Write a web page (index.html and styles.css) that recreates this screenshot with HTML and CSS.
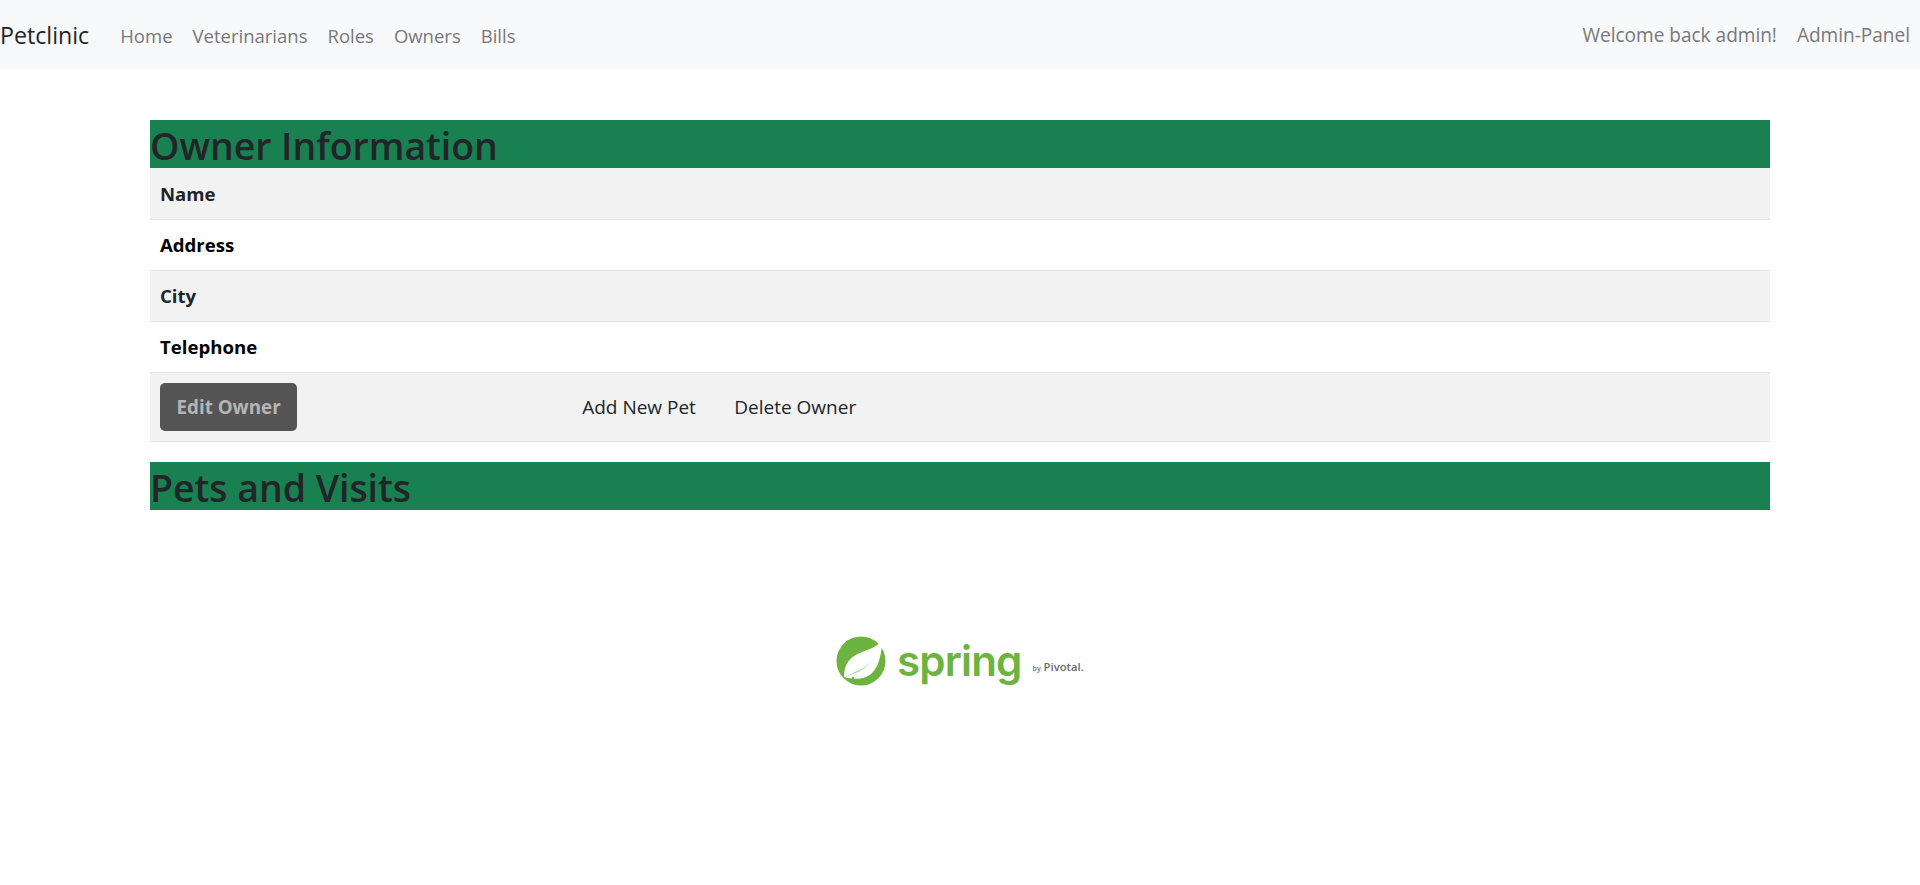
FILE: index.html
```html
<!DOCTYPE html>
<html lang="en">
<head>
  <meta charset="UTF-8">
  <title>Petclinic</title>
  <link rel="stylesheet" href="styles.css">
</head>
<body>

  <nav class="navbar">
    <a class="brand" href="#">Petclinic</a>
    <ul class="nav-list">
      <li><a href="#">Home</a></li>
      <li><a href="#">Veterinarians</a></li>
      <li><a href="#">Roles</a></li>
      <li><a href="#">Owners</a></li>
      <li><a href="#">Bills</a></li>
    </ul>
    <ul class="nav-list nav-right">
      <li><a href="#">Welcome back admin!</a></li>
      <li><a href="#">Admin-Panel</a></li>
    </ul>
  </nav>

  <main class="container">
    <h2 class="section-title">Owner Information</h2>
    <table class="info-table">
      <tr class="striped"><th>Name</th><td></td></tr>
      <tr><th class="dark">Address</th><td></td></tr>
      <tr class="striped"><th>City</th><td></td></tr>
      <tr><th class="dark">Telephone</th><td></td></tr>
      <tr class="striped actions">
        <td class="edit-cell"><a class="btn-edit" href="#">Edit Owner</a></td>
        <td><a class="btn-link" href="#">Add New Pet</a><a class="btn-link" href="#">Delete Owner</a></td>
      </tr>
    </table>
    <h2 class="section-title">Pets and Visits</h2>
  </main>

  <footer class="footer">
    <div class="logo">
      <svg class="leaf" width="50" height="50" viewBox="0 0 50 50">
        <circle cx="25" cy="25" r="24.5" fill="#6db33f"/>
        <path d="M45 2 L50 0 L50 12 C49 9 47 5 45 2 Z" fill="#fff"/>
        <path d="M46 4 C41 11 34 13 26 16 C15 20 8 27 8 41 C18 44 30 44 37 36 C43 29 46 17 46 4 Z" fill="#fff"/>
        <path d="M9 41 C17 36 28 34 36 25 C30 33 19 38 9 41 Z" fill="#a9d18e"/>
        <circle cx="17" cy="42" r="1.2" fill="#6db33f"/>
      </svg>
      <span class="logo-word">spring</span>
      <span class="logo-by"><small>by</small> Pivotal.</span>
    </div>
  </footer>

</body>
</html>
```

FILE: styles.css
```css
* {
  box-sizing: border-box;
}
body {
  margin: 0;
  font-family: "Open Sans", Arial, sans-serif;
  font-size: 18.6px;
  color: #212529;
  background-color: #fff;
}
a {
  text-decoration: none;
}
.navbar {
  display: flex;
  align-items: center;
  height: 70px;
  background-color: #f8f9fa;
}
.brand {
  font-size: 23.2px;
  color: #212529;
  margin-right: 21px;
}
.nav-list {
  display: flex;
  list-style: none;
  margin: 0;
  padding: 0;
}
.nav-list a {
  display: block;
  padding: 9px 10px;
  font-size: 18.5px;
  color: #78787a;
}
.nav-right {
  margin-left: auto;
}
.nav-right a {
  font-size: 19.05px;
}
.container {
  width: 1620px;
  margin: 50px auto 0;
}
.section-title {
  height: 48px;
  margin: 0;
  font-size: 37.4px;
  font-weight: 600;
  line-height: 52px;
  background-color: #198051;
}
.info-table {
  width: 100%;
  border-collapse: collapse;
  margin-bottom: 20px;
}
.info-table tr {
  height: 51px;
  border-bottom: 1px solid #dee2e6;
}
.info-table th {
  width: 412px;
  padding: 0 10px;
  text-align: left;
  font-weight: 700;
}
.info-table .dark {
  color: #000;
}
.striped {
  background-color: #f2f2f2;
}
.info-table .actions {
  height: 69px;
}
.edit-cell {
  width: 412px;
  padding: 0 10px;
}
.btn-edit {
  display: inline-block;
  height: 48px;
  padding: 0 16.5px;
  line-height: 48px;
  font-weight: 700;
  font-size: 18.8px;
  color: #b5b5b5;
  background-color: #545454;
  border-radius: 5px;
}
.btn-link {
  display: inline-block;
  padding: 0 19.2px;
  font-size: 19px;
  color: #212529;
}
.footer {
  display: flex;
  justify-content: center;
  margin-top: 126px;
}
.logo {
  display: flex;
  align-items: center;
  width: 248px;
  height: 50px;
}
.leaf {
  flex: none;
  margin-right: 11px;
}
.logo-word {
  font-family: "Inter", sans-serif;
  font-size: 42px;
  line-height: 50px;
  font-weight: 600;
  color: #6db33f;
  letter-spacing: -0.8px;
}
.logo-by {
  margin: 12px 0 0 11px;
  font-size: 11.3px;
  font-weight: 600;
  color: #6c6c6c;
  white-space: nowrap;
}
.logo-by small {
  font-size: 7px;
}
```
